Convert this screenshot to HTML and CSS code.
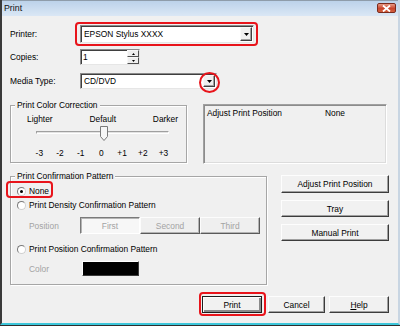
FILE: index.html
```html
<!DOCTYPE html>
<html>
  <head>
    <title>Print</title>
    <link rel="stylesheet" href="styles.css">
  </head>
  <body>
    <div class="window">
      <div class="titlebar">
        <span class="title">Print</span>
        <span class="close">
          <svg width="9" height="7" viewBox="0 0 9 7"><path d="M1 0.5L8 6.5M8 0.5L1 6.5" stroke="#fff" stroke-width="1.8"/></svg>
        </span>
      </div>
      <div class="content">
        <div class="row row-printer">
          <span class="field-label">Printer:</span>
          <div class="combo combo-printer">
            <span class="combo-text">EPSON Stylus XXXX</span>
            <span class="drop"><svg width="5" height="3" viewBox="0 0 5 3"><path d="M0 0H5L2.5 3Z"/></svg></span>
            <span class="ring ring-printer"></span>
          </div>
        </div>
        <div class="row row-copies">
          <span class="field-label">Copies:</span>
          <div class="combo spin">
            <span class="combo-text">1</span>
            <span class="spin-btns">
              <span class="spin-btn"><svg width="3" height="2" viewBox="0 0 3 2"><path d="M1.5 0L3 2H0Z"/></svg></span>
              <span class="spin-btn"><svg width="3" height="2" viewBox="0 0 3 2"><path d="M0 0H3L1.5 2Z"/></svg></span>
            </span>
          </div>
        </div>
        <div class="row row-media">
          <span class="field-label">Media Type:</span>
          <div class="combo combo-media">
            <span class="combo-text">CD/DVD</span>
            <span class="drop">
              <svg width="5" height="3" viewBox="0 0 5 3"><path d="M0 0H5L2.5 3Z"/></svg>
              <span class="ring ring-circle"></span>
            </span>
          </div>
        </div>

        <div class="row row-color">
          <div class="group group-color">
            <span class="legend">Print Color Correction</span>
            <div class="scale-labels">
              <span>Lighter</span><span>Default</span><span>Darker</span>
            </div>
            <div class="slider">
              <span class="track"></span>
              <svg class="thumb" width="8" height="15" viewBox="0 0 8 15"><path d="M0.5 0.5H7.5V10.5L4 14.5L0.5 10.5Z" fill="#f6f6f6" stroke="#7a7a7a"/></svg>
            </div>
            <div class="ticks">
              <span>-3</span><span>-2</span><span>-1</span><span>0</span><span>+1</span><span>+2</span><span>+3</span>
            </div>
          </div>
          <div class="info-box">
            <span class="info-key">Adjust Print Position</span>
            <span>None</span>
          </div>
        </div>

        <div class="row row-confirm">
          <div class="group group-confirm">
            <span class="legend">Print Confirmation Pattern</span>
            <div class="radio-row radio-none">
              <span class="radio checked"></span>
              <span>None</span>
              <span class="ring ring-none"></span>
            </div>
            <div class="radio-row radio-density">
              <span class="radio"></span>
              <span>Print Density Confirmation Pattern</span>
            </div>
            <div class="sub-row sub-position">
              <span class="sub-label">Position</span>
              <div class="segments">
                <span class="seg pressed">First</span>
                <span class="seg">Second</span>
                <span class="seg">Third</span>
              </div>
            </div>
            <div class="radio-row radio-position">
              <span class="radio"></span>
              <span>Print Position Confirmation Pattern</span>
            </div>
            <div class="sub-row sub-color">
              <span class="sub-label">Color</span>
              <span class="swatch"></span>
            </div>
          </div>
          <div class="side-buttons">
            <span class="btn btn-side first">Adjust Print Position</span>
            <span class="btn btn-side">Tray</span>
            <span class="btn btn-side">Manual Print</span>
          </div>
        </div>

        <div class="row row-actions">
          <span class="btn btn-default btn-print">Print<span class="ring ring-print"></span></span>
          <span class="btn btn-cancel">Cancel</span>
          <span class="btn btn-help"><u>H</u>elp</span>
        </div>
      </div>
    </div>
  </body>
</html>
```

FILE: styles.css
```css
body {
  margin: 0;
  font-family: "Liberation Sans", Arial, sans-serif;
  font-size: 8.4px;
  color: #000;
  background: #2e2e2e;
}
.window {
  width: 400px;
  height: 325px;
  box-sizing: border-box;
  background: #f0f0f0;
  border-left: 2px solid #3a3a3a;
  border-right: 2px solid #c8d5e2;
  border-bottom: 2px solid #3cc6da;
}

/* title bar */
.titlebar {
  height: 16px;
  box-sizing: border-box;
  border-top: 1px solid #8e9caa;
  background: linear-gradient(#bcd2ea, #dae7f5);
  display: flex;
  align-items: center;
  padding: 0 2px 1px 2px;
}
.title {
  font-size: 8.8px;
  color: #111;
}
.close {
  margin-left: auto;
  width: 19px;
  height: 10px;
  box-sizing: border-box;
  border: 1px solid #7b2a1c;
  border-radius: 2px;
  background: linear-gradient(#e79a86, #c9452c 55%, #d2603f);
  display: flex;
  align-items: center;
  justify-content: center;
}
.close svg {
  display: block;
}

.content {
  padding: 9px 9px 0 8px;
}
.row {
  display: flex;
  align-items: center;
}
.field-label {
  width: 70px;
}

/* combo / edit boxes */
.combo {
  position: relative;
  box-sizing: border-box;
  background: #fff;
  border: 1px solid;
  border-color: #8a8a8a #e6e6e6 #e6e6e6 #8a8a8a;
  box-shadow: inset 1px 1px #3f3f3f;
  display: flex;
  align-items: center;
}
.combo-text {
  padding-left: 2px;
}
.drop {
  position: relative;
  margin-left: auto;
  width: 12px;
  height: 100%;
  box-sizing: border-box;
  background: #efefef;
  border: 1px solid;
  border-color: #f8f8f8 #404040 #404040 #f8f8f8;
  box-shadow: inset -1px -1px #a0a0a0;
  display: flex;
  align-items: center;
  justify-content: center;
}
.drop svg {
  display: block;
}
.row-printer {
  height: 18px;
}
.combo-printer {
  width: 174px;
  height: 18px;
  padding: 1px;
}
.row-copies {
  margin-top: 6px;
  height: 16px;
}
.spin {
  width: 60px;
  height: 16px;
}
.spin-btns {
  margin-left: auto;
  width: 12px;
  height: 100%;
  display: flex;
  flex-direction: column;
}
.spin-btn {
  flex: 1;
  box-sizing: border-box;
  background: #efefef;
  border: 1px solid;
  border-color: #f8f8f8 #505050 #505050 #f8f8f8;
  display: flex;
  align-items: center;
  justify-content: center;
}
.spin-btn svg {
  display: block;
}
.row-media {
  margin-top: 8px;
  height: 16px;
}
.combo-media {
  width: 137px;
  height: 16px;
  padding: 1px;
}

/* red highlight marks */
.ring {
  position: absolute;
  border: 2px solid #e8141b;
  border-radius: 4px;
  pointer-events: none;
}
.ring-printer {
  left: -6px;
  right: -5px;
  top: -4px;
  bottom: -4px;
}
.ring-circle {
  width: 21px;
  height: 21px;
  box-sizing: border-box;
  border-radius: 50%;
  left: -5px;
  top: -4px;
}
.ring-none {
  left: -5px;
  top: -4px;
  width: 47px;
  height: 17px;
  box-sizing: border-box;
}
.ring-print {
  left: -4px;
  right: -5px;
  top: -5px;
  bottom: -4px;
}

/* group boxes */
.group {
  position: relative;
  box-sizing: border-box;
  border: 1px solid #a6a6a6;
  box-shadow: inset 1px 1px #fff, 1px 1px #fff;
}
.legend {
  display: block;
  width: fit-content;
  margin: -6px 0 0 4px;
  padding: 0 2px;
  line-height: 10px;
  background: #f0f0f0;
}
.row-color {
  margin-top: 15px;
  align-items: center;
}
.group-color {
  width: 177px;
  height: 58px;
}
.scale-labels {
  display: flex;
  justify-content: space-between;
  margin: 4px 8px 0 16px;
  line-height: 10px;
}
.slider {
  position: relative;
  height: 15px;
  margin-top: 2px;
}
.track {
  position: absolute;
  left: 25px;
  top: 5px;
  width: 133px;
  height: 3px;
  box-sizing: border-box;
  border: 1px solid;
  border-color: #a0a0a0 #fff #fff #a0a0a0;
  background: #e3e3e3;
}
.thumb {
  position: absolute;
  left: 89px;
  top: 0;
  display: block;
}
.ticks {
  display: flex;
  margin: 7px 0 0 18px;
  line-height: 10px;
}
.ticks span {
  width: 20.7px;
  text-align: center;
}
.info-box {
  margin-left: 16px;
  width: 184px;
  height: 60px;
  box-sizing: border-box;
  border: 1px solid;
  border-color: #a0a0a0 #fff #fff #a0a0a0;
  box-shadow: inset 1px 1px #8c8c8c, inset -1px -1px #dcdcdc;
  display: flex;
  align-items: flex-start;
  padding: 3px 3px;
  line-height: 10px;
}
.info-key {
  width: 118px;
}

/* confirmation pattern */
.row-confirm {
  margin-top: 11px;
  align-items: flex-start;
}
.group-confirm {
  margin-top: 1px;
  width: 257px;
  height: 109px;
}
.radio-row {
  position: relative;
  display: flex;
  align-items: center;
  height: 12px;
  padding-left: 6px;
}
.radio {
  width: 9px;
  height: 9px;
  box-sizing: border-box;
  border-radius: 50%;
  border: 1px solid;
  border-color: #7a7a7a #d0d0d0 #d0d0d0 #7a7a7a;
  background: #fff;
  margin-right: 3px;
  display: flex;
  align-items: center;
  justify-content: center;
}
.radio.checked::after {
  content: "";
  width: 3px;
  height: 3px;
  border-radius: 50%;
  background: #000;
}
.radio-none {
  margin-top: 4px;
}
.radio-density {
  margin-top: 2px;
}
.radio-position {
  margin-top: 9px;
}
.sub-row {
  display: flex;
  align-items: center;
  padding-left: 18px;
  color: #a3a3a3;
}
.sub-label {
  width: 51px;
}
.sub-position {
  margin-top: 6px;
  height: 17px;
}
.segments {
  display: flex;
  height: 17px;
}
.seg {
  width: 60px;
  box-sizing: border-box;
  display: flex;
  align-items: center;
  justify-content: center;
  background: #efefef;
  border: 1px solid;
  border-color: #fcfcfc #5a5a5a #5a5a5a #fcfcfc;
  box-shadow: inset -1px -1px #b4b4b4;
}
.seg.pressed {
  background: #f7f7f7;
  border-color: #7a7a7a #fff #fff #7a7a7a;
  box-shadow: inset 1px 1px #b4b4b4;
}
.sub-color {
  margin-top: 6px;
  height: 15px;
}
.swatch {
  margin-left: 2px;
  width: 57px;
  height: 15px;
  box-sizing: border-box;
  background: #000;
  border: 1px solid;
  border-color: #fff #3a3a3a #3a3a3a #fff;
}

/* buttons */
.btn {
  position: relative;
  box-sizing: border-box;
  display: flex;
  align-items: center;
  justify-content: center;
  background: #f1f1f1;
  border: 1px solid;
  border-color: #fdfdfd #3c3c3c #3c3c3c #fdfdfd;
  box-shadow: inset -1px -1px #a0a0a0;
}
.side-buttons {
  margin-left: 14px;
  display: flex;
  flex-direction: column;
}
.btn-side {
  width: 108px;
  height: 17px;
  margin-top: 7px;
}
.btn-side.first {
  height: 18px;
  margin-top: 0;
}
.row-actions {
  margin-top: 11px;
  justify-content: flex-end;
}
.btn-print {
  width: 60px;
  height: 17px;
}
.btn-default {
  border: 1px solid #1e1e1e;
  box-shadow: inset 1px 1px #fdfdfd, inset -2px -2px #8a8a8a;
}
.btn-cancel {
  margin-left: 6px;
  width: 57px;
  height: 17px;
}
.btn-help {
  margin-left: 4px;
  width: 60px;
  height: 17px;
}
```
